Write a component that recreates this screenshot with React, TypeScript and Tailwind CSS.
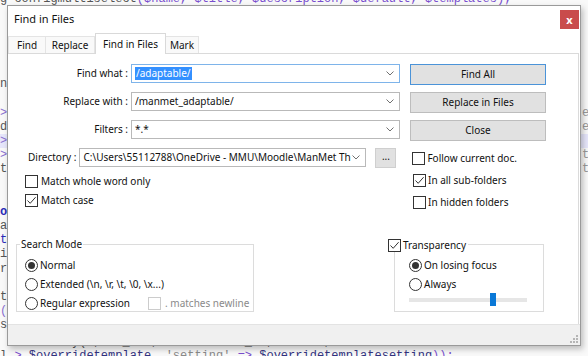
import React from "react";

const UI = { fontFamily: '"Noto Sans", "Open Sans", sans-serif' };
const MONO = { fontFamily: '"Liberation Mono", "DejaVu Sans Mono", monospace' };

function Check({ checked = false, disabled = false }: { checked?: boolean; disabled?: boolean }) {
  return (
    <span
      className={
        "relative inline-flex w-[13px] h-[13px] shrink-0 items-center justify-center border bg-white " +
        (disabled ? "border-[#cccccc]" : "border-[#333333]")
      }
    >
      {checked && (
        <svg width="11" height="11" viewBox="0 0 11 11" className="block">
          <path d="M1.5 5.5 L4.2 8.3 L9.6 2.2" fill="none" stroke="#333" strokeWidth="1" />
        </svg>
      )}
    </span>
  );
}

function Radio({ checked = false }: { checked?: boolean }) {
  return (
    <span className="inline-flex w-[13px] h-[13px] shrink-0 items-center justify-center rounded-full border border-[#333333] bg-white">
      {checked && <span className="block w-[7px] h-[7px] rounded-full bg-[#333333]" />}
    </span>
  );
}

function Chevron() {
  return (
    <svg width="8" height="5" viewBox="0 0 8 5" className="block">
      <path d="M0.5 0.5 L4 4 L7.5 0.5" fill="none" stroke="#707070" strokeWidth="1" />
    </svg>
  );
}

function Combo({
  value,
  width,
  focused = false,
  selected = false,
}: {
  value: string;
  width: string;
  focused?: boolean;
  selected?: boolean;
}) {
  return (
    <div
      className={
        "flex h-[19px] items-center border bg-white pl-[3px] pr-[5px] " +
        width +
        (focused ? " border-[#7eb4ea]" : " border-[#b9b9b9]")
      }
    >
      <div className="flex-1 overflow-hidden whitespace-nowrap text-[10px] leading-[13px] text-[#111]">
        {selected ? <span className="bg-[#3390ff] px-[1px] text-white">{value}</span> : value}
      </div>
      <Chevron />
    </div>
  );
}

function Btn({ label, def = false }: { label: string; def?: boolean }) {
  return (
    <div
      className={
        "flex h-[21px] w-[136px] items-center justify-center bg-[#e1e1e1] text-[10px] text-[#111] border " +
        (def ? "border-[#4b93d8]" : "border-[#bdbdbd]")
      }
    >
      {label}
    </div>
  );
}

type Line = { left: string; right?: string; hl?: boolean; cls?: string; tall?: boolean };

const codeLines: Line[] = [
  { left: "" }, // top line (special)
  { left: "" },
  { left: "" },
  { left: "" },
  { left: "" },
  { left: "" },
  { left: "n", cls: "text-[#555]" },
  { left: "" },
  { left: ">", right: "e", cls: "text-[#8a6fd0]" },
  { left: "d", right: "e", cls: "text-[#555]" },
  { left: ">", hl: true, cls: "text-[#8a6fd0]" },
  { left: ">", right: "t", cls: "text-[#8a6fd0]" },
  { left: "t", right: "t", cls: "text-[#555]" },
  { left: "" },
  { left: "" },
  { left: "o", cls: "text-[#2a2ab8] font-bold" },
  { left: "a", cls: "text-[#555]" },
  { left: "t", cls: "text-[#2a2ab8]" },
  { left: "i", cls: "text-[#555]" },
  { left: "r", cls: "text-[#555]" },
  { left: "" },
  { left: "t", cls: "text-[#555]" },
  { left: "(", cls: "text-[#8a6fd0]" },
  { left: "s", cls: "text-[#555]" },
  { left: "", tall: true }, // partially hidden line
  { left: "" }, // bottom line (special)
];

function Editor() {
  const last = codeLines.length - 1;
  return (
    <div className="-mt-[8px] flex flex-col text-[12px] leading-[14.2px]" style={MONO}>
      {codeLines.map((l, i) => (
        <div
          key={i}
          className={
            "relative whitespace-pre " + (l.tall ? "h-[16.2px] pt-[2px] " : "h-[14.2px] ") + (l.hl ? "bg-[#e6e6fa]" : "")
          }
        >
          {i === 0 ? (
            <span>
              <span className="text-[#555]">g configmultiselect</span>
              <span className="text-[#7a4fcf]">($name, $title, $description, $default, $templates);</span>
            </span>
          ) : i === last - 1 ? (
            <span className="text-[#555]">{"      array(', ' _ ' , ' => '   ' _ ', ' => ',"}</span>
          ) : i === last ? (
            <span>
              <span className="text-[#555]">l </span>
              <span className="text-[#7a4fcf]">&gt; </span>
              <span className="text-[#333380]">$overridetemplate</span>
              <span className="text-[#7a4fcf]">, </span>
              <span className="text-[#8a8a8a]">'setting'</span>
              <span className="text-[#7a4fcf]"> =&gt; </span>
              <span className="text-[#333380]">$overridetemplatesetting</span>
              <span className="text-[#7a4fcf]">));</span>
            </span>
          ) : (
            <span className={l.cls}>{l.left}</span>
          )}
          {l.right && <span className="absolute left-[582px] top-0 text-[#999]">{l.right}</span>}
        </div>
      ))}
    </div>
  );
}

export default function App() {
  return (
    <div className="relative h-[356px] w-[588px] overflow-hidden bg-[#f9f9f9]">
      <Editor />
      {/* Dialog window */}
      <div
        className="absolute left-[7px] top-[5px] flex h-[341px] w-[574px] flex-col border border-[#9a9a9a] bg-white shadow-[2px_3px_6px_rgba(0,0,0,0.25)]"
        style={UI}
      >
        {/* Title bar */}
        <div className="flex h-[27px] shrink-0 items-start justify-between">
          <div className="pl-[6px] pt-[6px] text-[11px] leading-[14px] text-[#111]">Find in Files</div>
          <div className="mr-[1px] mt-[4px] flex h-[19px] w-[19px] items-center justify-center bg-[#c94b4b] text-[11px] font-bold leading-none text-white">
            x
          </div>
        </div>
        {/* Tabs */}
        <div className="flex h-[20px] shrink-0 items-end">
          <div className="flex h-[17px] w-[38px] items-center justify-center border border-b-0 border-[#e4e4e4] bg-[#f9f9f9] text-[10px] text-[#111]">
            Find
          </div>
          <div className="flex h-[17px] w-[49px] items-center justify-center border border-b-0 border-l-0 border-[#e4e4e4] bg-[#f9f9f9] text-[10px] text-[#111]">
            Replace
          </div>
          <div className="relative -mb-[1px] flex h-[21px] w-[71px] items-center justify-center border border-b-0 border-[#d9d9d9] bg-white text-[10px] text-[#111]">
            Find in Files
          </div>
          <div className="flex h-[17px] w-[33px] items-center justify-center border border-b-0 border-l-0 border-[#e4e4e4] bg-[#f9f9f9] text-[10px] text-[#111]">
            Mark
          </div>
        </div>
        {/* Panel */}
        <div className="mr-[1px] flex h-[271px] shrink-0 flex-col border-t border-r border-[#dadada] text-[10px] text-[#111]">
          <div className="h-[10px]" />
          {[
            { label: "Find what :", value: "/adaptable/", btn: "Find All", focused: true },
            { label: "Replace with :", value: "/manmet_adaptable/", btn: "Replace in Files" },
            { label: "Filters :", value: "*.*", btn: "Close" },
          ].map((r, i) => (
            <div key={i} className="mb-[7px] flex h-[21px] items-start">
              <div className="flex h-[19px] w-[120px] items-center justify-end">{r.label}</div>
              <div className="ml-[3px]">
                <Combo value={r.value} width="w-[269px]" focused={r.focused} selected={r.focused} />
              </div>
              <div className="ml-[10px]">
                <Btn label={r.btn} def={r.focused} />
              </div>
            </div>
          ))}
          {/* Directory row */}
          <div className="flex h-[20px] items-start">
            <div className="ml-[20px] flex h-[19px] items-center">Directory :</div>
            <div className="ml-[3px]">
              <Combo value="C:\Users\55112788\OneDrive - MMU\Moodle\ManMet Th" width="w-[287px]" />
            </div>
            <div className="ml-[9px] flex h-[20px] w-[21px] items-center justify-center border border-[#cfcfcf] bg-[#e1e1e1] pb-[3px] text-[10px]">
              ...
            </div>
            <div className="ml-[16px] flex h-[20px] items-center gap-[2px]">
              <Check />
              <span>Follow current doc.</span>
            </div>
          </div>
          {/* Checkbox rows */}
          <div className="flex">
            <div className="ml-[17px] mt-[7px] flex w-[380px] flex-col gap-[6px]">
              <div className="flex h-[13px] items-center gap-[3px]">
                <Check />
                <span>Match whole word only</span>
              </div>
              <div className="flex h-[13px] items-center gap-[3px]">
                <Check checked />
                <span>Match case</span>
              </div>
            </div>
            <div className="ml-[8px] mt-[6px] flex flex-col gap-[9px]">
              <div className="flex h-[13px] items-center gap-[2px]">
                <Check checked />
                <span>In all sub-folders</span>
              </div>
              <div className="flex h-[13px] items-center gap-[2px]">
                <Check />
                <span>In hidden folders</span>
              </div>
            </div>
          </div>
          {/* Group boxes */}
          <div className="mt-[35px] flex">
            <div className="relative ml-[8px] h-[68px] w-[238px] border border-[#dcdcdc]">
              <div className="absolute -top-[7px] left-[3px] bg-white px-[1px] leading-[13px]">Search Mode</div>
              <div className="flex flex-col gap-[6px] pl-[8px] pt-[14px]">
                <div className="flex h-[13px] items-center gap-[2px]">
                  <Radio checked />
                  <span>Normal</span>
                </div>
                <div className="flex h-[13px] items-center gap-[2px]">
                  <Radio />
                  <span>Extended (\n, \r, \t, \0, \x...)</span>
                </div>
                <div className="flex h-[13px] items-center gap-[2px]">
                  <Radio />
                  <span className="w-[106px]">Regular expression</span>
                  <Check disabled />
                  <span className="ml-[2px] text-[#8a8a8a]">. matches newline</span>
                </div>
              </div>
            </div>
            <div className="relative ml-[140px] h-[68px] w-[150px] border border-[#dcdcdc]">
              <div className="absolute -left-[7px] -top-[6px] flex items-center gap-[2px] bg-white pr-[2px] leading-[13px]">
                <Check checked />
                <span>Transparency</span>
              </div>
              <div className="flex flex-col gap-[6px] pl-[14px] pt-[14px]">
                <div className="flex h-[13px] items-center gap-[2px]">
                  <Radio checked />
                  <span>On losing focus</span>
                </div>
                <div className="flex h-[13px] items-center gap-[2px]">
                  <Radio />
                  <span>Always</span>
                </div>
                <div className="relative mt-[1px] h-[4px] w-[118px] bg-[#e6e6e6]">
                  <div className="absolute left-[81px] -top-[5px] h-[13px] w-[6px] bg-[#0a78d7]" />
                </div>
              </div>
            </div>
          </div>
        </div>
        {/* Footer */}
        <div className="relative flex-1 border-t border-[#e3e3e3] bg-[#f0f0f0]">
          <svg width="8" height="8" viewBox="0 0 8 8" className="absolute bottom-[2px] right-[2px]">
            {[
              [6, 0],
              [3, 3],
              [6, 3],
              [0, 6],
              [3, 6],
              [6, 6],
            ].map(([x, y], i) => (
              <rect key={i} x={x} y={y} width="2" height="2" fill="#b5b5b5" />
            ))}
          </svg>
        </div>
      </div>
    </div>
  );
}
